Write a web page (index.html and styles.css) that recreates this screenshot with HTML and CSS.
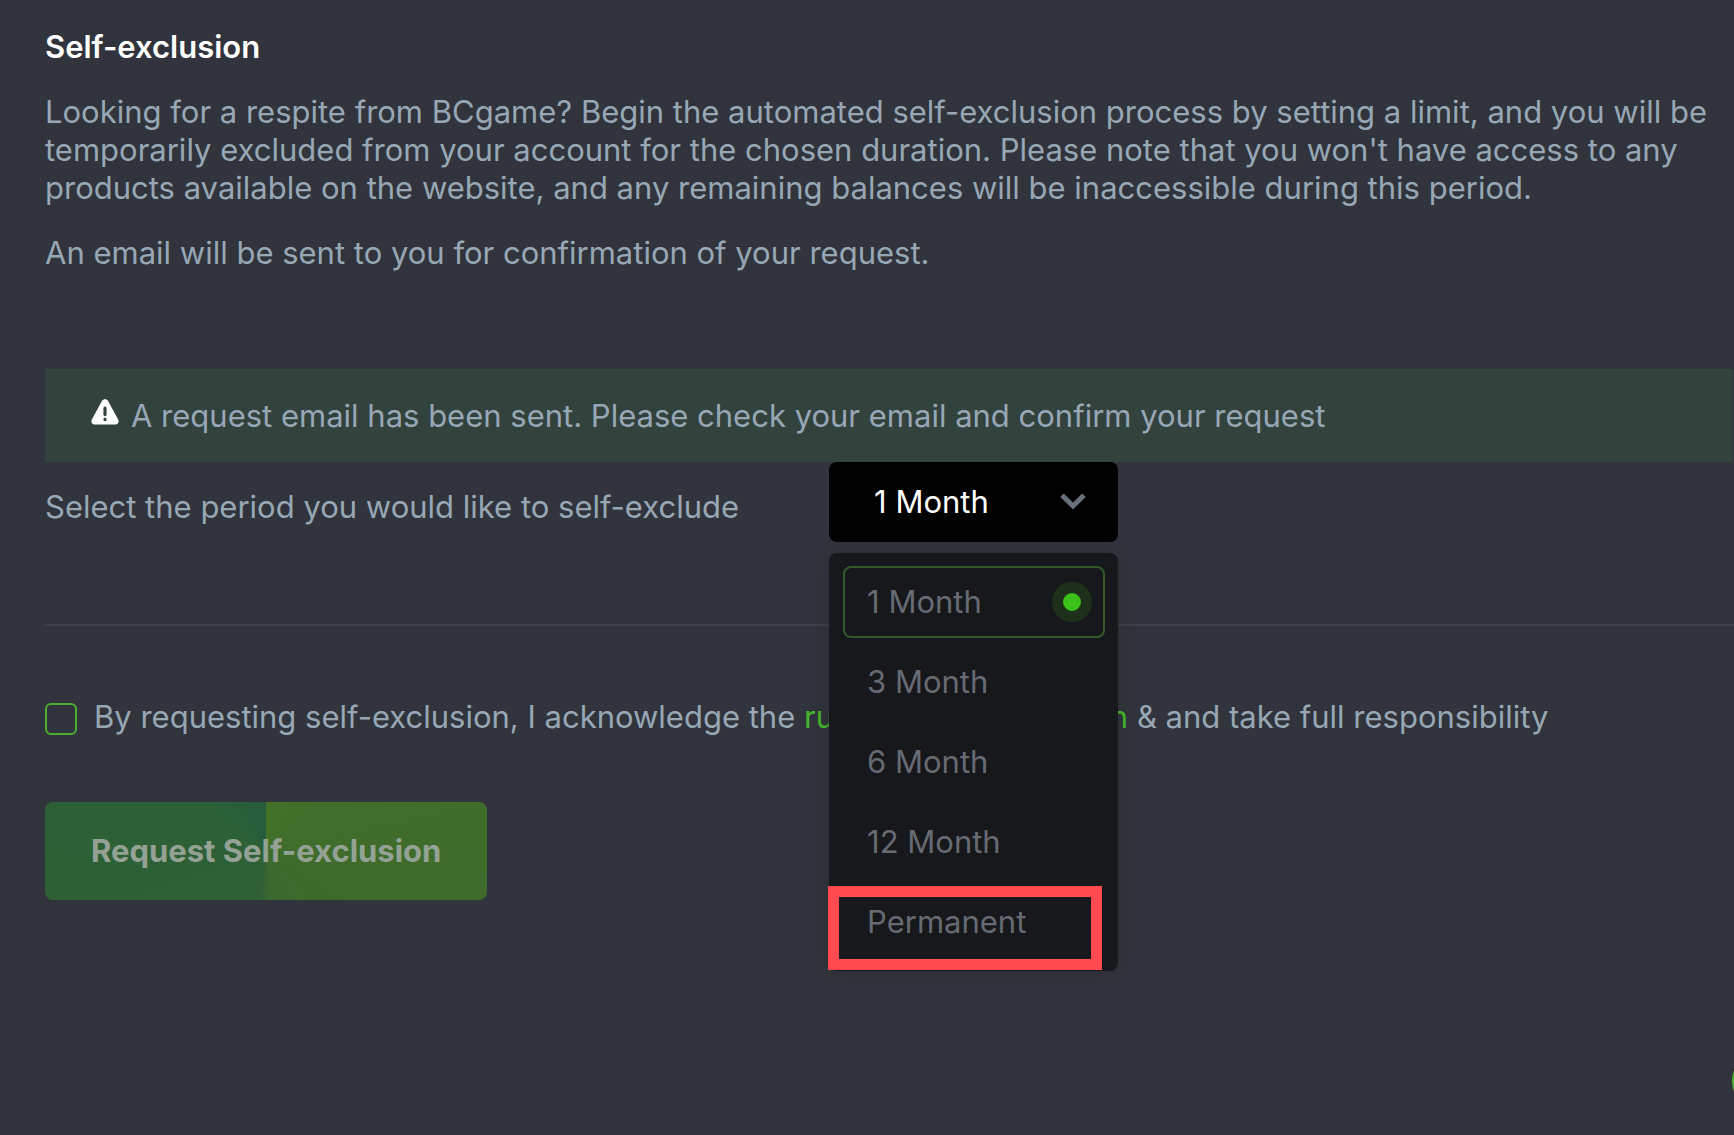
FILE: index.html
```html
<!DOCTYPE html>
<html lang="en">
<head>
<meta charset="utf-8">
<meta name="viewport" content="width=device-width, initial-scale=1">
<title>Self-exclusion</title>
<link rel="stylesheet" href="styles.css">
</head>
<body>
<main class="page">
  <section class="intro">
    <h1 class="title">Self-exclusion</h1>
    <p class="text">Looking for a respite from BCgame? Begin the automated self-exclusion process by setting a limit, and you will be temporarily excluded from your account for the chosen duration. Please note that you won't have access to any products available on the website, and any remaining balances will be inaccessible during this period.</p>
    <p class="text">An email will be sent to you for confirmation of your request.</p>
  </section>

  <form class="form">
    <div class="notice" role="status">
      <svg class="notice-icon" viewBox="0 0 28 26" aria-hidden="true">
        <path fill="#fff" d="M11.2 1.6Q14-1.4 16.8 1.6L27.2 20.6Q28.6 25 24.4 25.6H3.6Q-.6 25 .8 20.6Z"/>
        <path stroke="#32423d" stroke-width="3.2" stroke-linecap="round" d="M14 9.2V15.6M14 20.2V20.6"/>
      </svg>
      <span>A request email has been sent. Please check your email and confirm your request</span>
    </div>

    <div class="period">
      <label class="period-label" for="period">Select the period you would like to self-exclude</label>
      <div class="dropdown">
        <select class="dropdown-select" id="period">
          <option selected>1 Month</option>
          <option>3 Month</option>
          <option>6 Month</option>
          <option>12 Month</option>
          <option>Permanent</option>
        </select>
        <svg class="dropdown-arrow" viewBox="0 0 26 16" aria-hidden="true">
          <path fill="none" stroke="#67707b" stroke-width="5" d="M2 2.2L13 13L24 2.2"/>
        </svg>
        <div class="menu" role="radiogroup" aria-label="Period">
          <label class="option">1 Month<input class="option-radio" type="radio" name="choice" checked></label>
          <label class="option">3 Month<input class="option-radio" type="radio" name="choice"></label>
          <label class="option">6 Month<input class="option-radio" type="radio" name="choice"></label>
          <label class="option">12 Month<input class="option-radio" type="radio" name="choice"></label>
          <label class="option">Permanent<input class="option-radio" type="radio" name="choice"></label>
          <span class="highlight"></span>
        </div>
      </div>
    </div>

    <div class="consent">
      <input class="consent-box" type="checkbox" id="consent">
      <label for="consent">By requesting self-exclusion, I acknowledge the <a class="link" href="#rules">rules of self-exclusion</a> &amp; and take full responsibility</label>
    </div>

    <button class="submit" type="button">Request Self-exclusion</button>
  </form>
</main>
<button class="chat" type="button" aria-label="Support chat"></button>
</body>
</html>
```
FILE: styles.css
```css
* {
  box-sizing: border-box;
}

body {
  margin: 0;
  min-height: 100vh;
  overflow-x: hidden;
  background: #31343c;
  color: #98a7b5;
  font: 400 31px/38px Inter, "Liberation Sans", sans-serif;
}

.page {
  padding: 28px 0 48px 45px;
}

.intro {
  display: flex;
  flex-direction: column;
  gap: 27px;
  padding-right: 20px;
}

.title,
.text {
  margin: 0;
}

.title {
  color: #fff;
  font-size: 31px;
  font-weight: 600;
}

.form {
  margin-top: 97px;
}

.notice {
  display: flex;
  gap: 12px;
  margin-right: 1px;
  padding: 28px 46px 27px;
  background: #32423d;
}

.notice-icon {
  flex: none;
  width: 28px;
  height: 26px;
  margin-top: 2px;
}

.period {
  display: flex;
  gap: 90px;
  height: 164px;
  border-bottom: 2px solid #3b3f47;
}

.period-label {
  padding-top: 26px;
}

.dropdown {
  position: relative;
  width: 289px;
}

.dropdown-select {
  appearance: none;
  width: 100%;
  height: 80px;
  padding: 0 45px;
  border: 0;
  border-radius: 8px;
  background: #000;
  color: #fff;
  font: inherit;
}

.dropdown-arrow {
  position: absolute;
  top: 31px;
  right: 32px;
  width: 26px;
  height: 16px;
  pointer-events: none;
}

.menu {
  position: absolute;
  top: 91px;
  left: 0;
  z-index: 1;
  display: flex;
  flex-direction: column;
  gap: 8px;
  width: 100%;
  padding: 13px 13px 13px 14px;
  border-radius: 8px;
  background: #17181b;
  box-shadow: 0 0 20px rgba(0, 0, 0, 0.14);
  color: #666b73;
}

.option {
  display: flex;
  align-items: center;
  justify-content: space-between;
  height: 72px;
  padding: 0 11px 0 22px;
  border: 2px solid transparent;
  border-radius: 8px;
}

.option:has(:checked) {
  border-color: #335a2b;
}

.option-radio {
  appearance: none;
  width: 40px;
  height: 40px;
  margin: 0;
  border-radius: 50%;
}

.option-radio:checked {
  border: 11px solid #1d3019;
  background: #3bc117;
}

.highlight {
  position: absolute;
  bottom: 1px;
  left: -1px;
  width: 274px;
  height: 84px;
  border: 11px solid #ff4b50;
  pointer-events: none;
}

.consent {
  display: flex;
  gap: 17px;
  margin-top: 72px;
}

.consent-box {
  appearance: none;
  flex: none;
  width: 32px;
  height: 32px;
  margin: 5px 0 0;
  border: 2px solid #4bb02f;
  border-radius: 6px;
}

.link {
  color: #46b52c;
  text-decoration: none;
}

.submit {
  margin-top: 66px;
  padding: 30px 46px;
  border: 0;
  border-radius: 8px;
  background: conic-gradient(#427127, #3f6c2b 25%, #3c692e 48%, #306136 52%, #2e6036 75%, #2c6037 85%, #265c3d);
  color: #94a295;
  font: inherit;
  font-weight: 700;
}

.chat {
  position: fixed;
  right: -58px;
  bottom: 24px;
  width: 60px;
  height: 60px;
  border: 0;
  border-radius: 50%;
  background: #4cb52f;
}
```
